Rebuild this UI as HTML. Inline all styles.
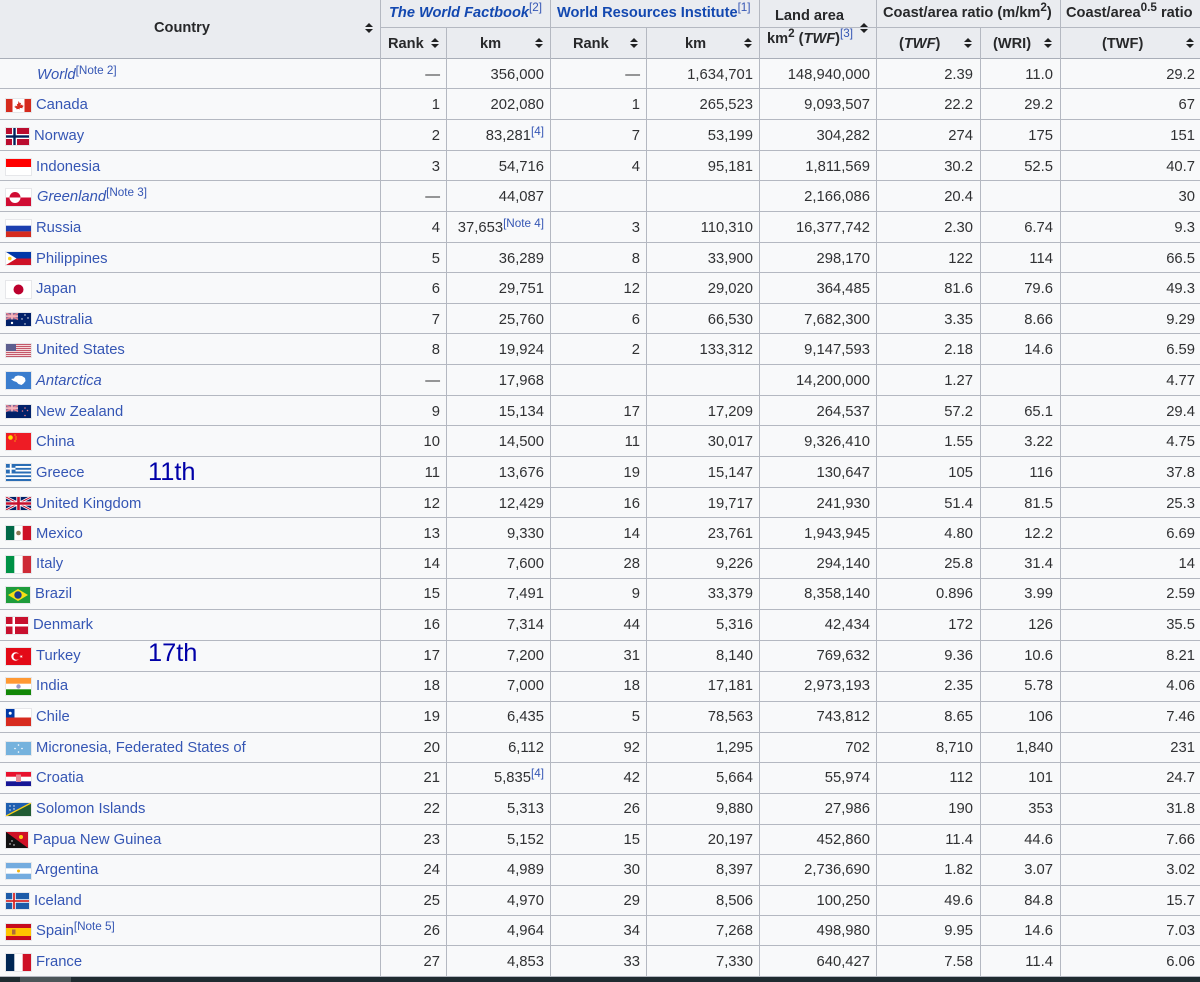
<!DOCTYPE html>
<html><head><meta charset="utf-8"><style>
html,body{margin:0;padding:0;background:#f8f9fa}
body{width:1200px;height:982px;position:relative;overflow:hidden;font-family:"Liberation Sans",Arial,sans-serif;font-size:14.8px;color:#303133;filter:blur(.3px)}
.r{position:absolute;left:0;width:1200px;height:31px;line-height:31px;border-top:1px solid #b4b8c1;white-space:nowrap;box-sizing:border-box}
.r a{position:absolute;left:36px;color:#3556b4;top:0}
.r span{position:absolute;top:0}
.u a,.u span{top:1px}
.r span:nth-of-type(1){right:760px}
.r span:nth-of-type(2){right:656px}
.r span:nth-of-type(3){right:560px}
.r span:nth-of-type(4){right:447px}
.r span:nth-of-type(5){right:330px}
.r span:nth-of-type(6){right:227px}
.r span:nth-of-type(7){right:147px}
.r span:nth-of-type(8){right:5px}
sup{font-size:11.7px;line-height:0;color:#3556b4;position:relative;top:1px;vertical-align:super}
.v{position:absolute;top:0;height:977px;width:1px;background:#b4b8c1;z-index:3}
.hd{position:absolute;left:0;top:0;width:1200px;height:59px;background:#eaecf0;border-bottom:1px solid #a9aeb8;box-sizing:border-box;z-index:1}
.h{position:absolute;font-weight:bold;font-size:14.6px;color:#27282a;white-space:nowrap;z-index:2;line-height:18px}
.h sup{font-weight:normal;font-size:11.7px;top:0}
.h a{color:#1348b0}
.s{position:absolute;width:8px;height:10px;z-index:2}
.s:before,.s:after{content:"";position:absolute;left:0;border-left:4px solid transparent;border-right:4px solid transparent}
.s:before{top:0;border-bottom:4.5px solid #202122}
.s:after{bottom:0;border-top:4.5px solid #202122}
svg{position:absolute;left:6px;z-index:2;outline:1px solid #e6e7ea}
.big{position:absolute;left:148px;font-size:25.4px;color:#0000a8;line-height:30px;z-index:2}
.ln{position:absolute;background:#b4b8c1;height:1px;z-index:2}
.bar{position:absolute;left:0;top:977px;width:1200px;height:5px;background:#1f2b30;z-index:5}
.th{position:absolute;left:20px;top:977px;width:51px;height:5px;background:#4c5659;z-index:6}
</style></head><body>
<div class="hd"></div>
<div class="ln" style="left:380px;top:27px;width:496px"></div>
<div class="ln" style="left:876px;top:27px;width:324px"></div>
<div class="h" style="left:154px;top:19px">Country</div>
<div class="h" style="left:389px;top:4px"><a><i>The World Factbook</i></a><sup>[2]</sup></div>
<div class="h" style="left:557px;top:4px"><a>World Resources Institute</a><sup>[1]</sup></div>
<div class="h" style="left:775px;top:7px">Land area</div>
<div class="h" style="left:767px;top:30px">km<sup style="color:#27282a;font-weight:bold">2</sup> (<i>TWF</i>)<sup>[3]</sup></div>
<div class="h" style="left:883px;top:4px">Coast/area ratio (m/km<sup style="color:#27282a;font-weight:bold">2</sup>)</div>
<div class="h" style="left:1066px;top:4px">Coast/area<sup style="color:#27282a;font-weight:bold">0.5</sup> ratio</div>
<div class="h" style="left:388px;top:35px">Rank</div>
<div class="h" style="left:480px;top:35px">km</div>
<div class="h" style="left:573px;top:35px">Rank</div>
<div class="h" style="left:685px;top:35px">km</div>
<div class="h" style="left:899px;top:35px">(<i>TWF</i>)</div>
<div class="h" style="left:993px;top:35px">(WRI)</div>
<div class="h" style="left:1102px;top:35px">(TWF)</div>
<b class="s" style="left:365px;top:23px"></b>
<b class="s" style="left:431px;top:38px"></b>
<b class="s" style="left:535px;top:38px"></b>
<b class="s" style="left:630px;top:38px"></b>
<b class="s" style="left:744px;top:38px"></b>
<b class="s" style="left:860px;top:23px"></b>
<b class="s" style="left:964px;top:38px"></b>
<b class="s" style="left:1044px;top:38px"></b>
<b class="s" style="left:1186px;top:38px"></b>

<div class="v" style="left:380px"></div><div class="v" style="left:446px;top:28px;height:949px"></div><div class="v" style="left:550px"></div><div class="v" style="left:646px;top:28px;height:949px"></div><div class="v" style="left:759px"></div><div class="v" style="left:876px"></div><div class="v" style="left:980px;top:28px;height:949px"></div><div class="v" style="left:1060px"></div>

<div class="r u" style="top:59px;border-top:0"><a style="left:37px"><i>World</i><sup>[Note 2]</sup></a><span>—</span><span>356,000</span><span>—</span><span>1,634,701</span><span>148,940,000</span><span>2.39</span><span>11.0</span><span>29.2</span></div>
<div class="r u" style="top:88px"><a>Canada</a><span>1</span><span>202,080</span><span>1</span><span>265,523</span><span>9,093,507</span><span>22.2</span><span>29.2</span><span>67</span></div>
<div class="r u" style="top:119px"><a style="left:34px">Norway</a><span>2</span><span>83,281<sup>[4]</sup></span><span>7</span><span>53,199</span><span>304,282</span><span>274</span><span>175</span><span>151</span></div>
<div class="r u" style="top:150px"><a>Indonesia</a><span>3</span><span>54,716</span><span>4</span><span>95,181</span><span>1,811,569</span><span>30.2</span><span>52.5</span><span>40.7</span></div>
<div class="r u" style="top:180px"><a style="left:37px"><i>Greenland</i><sup>[Note 3]</sup></a><span>—</span><span>44,087</span><span></span><span></span><span>2,166,086</span><span>20.4</span><span></span><span>30</span></div>
<div class="r u" style="top:211px"><a>Russia</a><span>4</span><span>37,653<sup>[Note 4]</sup></span><span>3</span><span>110,310</span><span>16,377,742</span><span>2.30</span><span>6.74</span><span>9.3</span></div>
<div class="r u" style="top:242px"><a>Philippines</a><span>5</span><span>36,289</span><span>8</span><span>33,900</span><span>298,170</span><span>122</span><span>114</span><span>66.5</span></div>
<div class="r u" style="top:272px"><a>Japan</a><span>6</span><span>29,751</span><span>12</span><span>29,020</span><span>364,485</span><span>81.6</span><span>79.6</span><span>49.3</span></div>
<div class="r u" style="top:303px"><a style="left:35px">Australia</a><span>7</span><span>25,760</span><span>6</span><span>66,530</span><span>7,682,300</span><span>3.35</span><span>8.66</span><span>9.29</span></div>
<div class="r u" style="top:333px"><a>United States</a><span>8</span><span>19,924</span><span>2</span><span>133,312</span><span>9,147,593</span><span>2.18</span><span>14.6</span><span>6.59</span></div>
<div class="r u" style="top:364px"><a><i>Antarctica</i></a><span>—</span><span>17,968</span><span></span><span></span><span>14,200,000</span><span>1.27</span><span></span><span>4.77</span></div>
<div class="r u" style="top:395px"><a>New Zealand</a><span>9</span><span>15,134</span><span>17</span><span>17,209</span><span>264,537</span><span>57.2</span><span>65.1</span><span>29.4</span></div>
<div class="r u" style="top:425px"><a>China</a><span>10</span><span>14,500</span><span>11</span><span>30,017</span><span>9,326,410</span><span>1.55</span><span>3.22</span><span>4.75</span></div>
<div class="r u" style="top:456px"><a>Greece</a><span>11</span><span>13,676</span><span>19</span><span>15,147</span><span>130,647</span><span>105</span><span>116</span><span>37.8</span></div>
<div class="r u" style="top:487px"><a>United Kingdom</a><span>12</span><span>12,429</span><span>16</span><span>19,717</span><span>241,930</span><span>51.4</span><span>81.5</span><span>25.3</span></div>
<div class="r u" style="top:517px"><a>Mexico</a><span>13</span><span>9,330</span><span>14</span><span>23,761</span><span>1,943,945</span><span>4.80</span><span>12.2</span><span>6.69</span></div>
<div class="r" style="top:548px"><a>Italy</a><span>14</span><span>7,600</span><span>28</span><span>9,226</span><span>294,140</span><span>25.8</span><span>31.4</span><span>14</span></div>
<div class="r" style="top:578px"><a style="left:35px">Brazil</a><span>15</span><span>7,491</span><span>9</span><span>33,379</span><span>8,358,140</span><span>0.896</span><span>3.99</span><span>2.59</span></div>
<div class="r" style="top:609px"><a style="left:33px">Denmark</a><span>16</span><span>7,314</span><span>44</span><span>5,316</span><span>42,434</span><span>172</span><span>126</span><span>35.5</span></div>
<div class="r" style="top:640px"><a>Turkey</a><span>17</span><span>7,200</span><span>31</span><span>8,140</span><span>769,632</span><span>9.36</span><span>10.6</span><span>8.21</span></div>
<div class="r" style="top:671px"><a style="top:-1px">India</a><span style="top:-1px">18</span><span style="top:-1px">7,000</span><span style="top:-1px">18</span><span style="top:-1px">17,181</span><span style="top:-1px">2,973,193</span><span style="top:-1px">2.35</span><span style="top:-1px">5.78</span><span style="top:-1px">4.06</span></div>
<div class="r" style="top:701px"><a>Chile</a><span>19</span><span>6,435</span><span>5</span><span>78,563</span><span>743,812</span><span>8.65</span><span>106</span><span>7.46</span></div>
<div class="r" style="top:732px"><a>Micronesia, Federated States of</a><span>20</span><span>6,112</span><span>92</span><span>1,295</span><span>702</span><span>8,710</span><span>1,840</span><span>231</span></div>
<div class="r" style="top:762px"><a>Croatia</a><span>21</span><span>5,835<sup>[4]</sup></span><span>42</span><span>5,664</span><span>55,974</span><span>112</span><span>101</span><span>24.7</span></div>
<div class="r" style="top:793px"><a>Solomon Islands</a><span>22</span><span>5,313</span><span>26</span><span>9,880</span><span>27,986</span><span>190</span><span>353</span><span>31.8</span></div>
<div class="r" style="top:824px"><a style="left:33px">Papua New Guinea</a><span>23</span><span>5,152</span><span>15</span><span>20,197</span><span>452,860</span><span>11.4</span><span>44.6</span><span>7.66</span></div>
<div class="r" style="top:854px"><a style="left:35px">Argentina</a><span>24</span><span>4,989</span><span>30</span><span>8,397</span><span>2,736,690</span><span>1.82</span><span>3.07</span><span>3.02</span></div>
<div class="r" style="top:885px"><a style="left:34px">Iceland</a><span>25</span><span>4,970</span><span>29</span><span>8,506</span><span>100,250</span><span>49.6</span><span>84.8</span><span>15.7</span></div>
<div class="r" style="top:915px"><a>Spain<sup>[Note 5]</sup></a><span>26</span><span>4,964</span><span>34</span><span>7,268</span><span>498,980</span><span>9.95</span><span>14.6</span><span>7.03</span></div>
<div class="r u" style="top:945px"><a>France</a><span>27</span><span>4,853</span><span>33</span><span>7,330</span><span>640,427</span><span>7.58</span><span>11.4</span><span>6.06</span></div>
<div class="ln" style="left:0;top:976px;width:1200px"></div>

<div class="big" style="top:457px">11th</div>
<div class="big" style="top:638px">17th</div>

<!-- Canada -->
<svg style="top:99px" width="25" height="13" viewBox="0 0 25 13"><rect width="25" height="13" fill="#fff"/><rect width="6.500" height="13" fill="#d52b1e"/><rect x="18.500" width="6.500" height="13" fill="#d52b1e"/><path d="M12.500 2l1.300 2.200 1.200-.4-.5 2.600 1.600-.9.4 1.100 1.300.2-1.400 1.600.3.9-3-.4v1.600h-.5V9.900l-3 .4.3-.9L8 7.800l1.300-.2.4-1.100 1.600.9-.5-2.600 1.200.4z" fill="#d52b1e"/></svg>
<!-- Norway -->
<svg style="top:128px" width="23" height="17" viewBox="0 0 23 17"><rect width="23" height="17" fill="#ba0c2f"/><rect x="6" width="5" height="17" fill="#fff"/><rect y="6" width="23" height="5" fill="#fff"/><rect x="7.300" width="2.400" height="17" fill="#00205b"/><rect y="7.300" width="23" height="2.400" fill="#00205b"/></svg>
<!-- Indonesia -->
<svg style="top:159px" width="25" height="16" viewBox="0 0 25 16"><rect width="25" height="16" fill="#fff"/><rect width="25" height="8" fill="#f00"/></svg>
<!-- Greenland -->
<svg style="top:189px" width="25" height="17" viewBox="0 0 25 17"><rect width="25" height="17" fill="#fff"/><rect y="8.500" width="25" height="8.500" fill="#d00c33"/><path d="M3.500 8.500a5.500 5.500 0 0 1 11 0z" fill="#d00c33"/><path d="M3.500 8.500a5.500 5.500 0 0 0 11 0z" fill="#fff"/></svg>
<!-- Russia -->
<svg style="top:220px" width="25" height="17" viewBox="0 0 25 17"><rect width="25" height="17" fill="#fff"/><rect y="5.700" width="25" height="5.700" fill="#1c3fb0"/><rect y="11.400" width="25" height="5.600" fill="#d52b1e"/></svg>
<!-- Philippines -->
<svg style="top:252px" width="25" height="13" viewBox="0 0 25 13"><rect width="25" height="6.500" fill="#0038a8"/><rect y="6.500" width="25" height="6.500" fill="#ce1126"/><path d="M0 0l10.500 6.500L0 13z" fill="#fff"/><circle cx="3.800" cy="6.500" r="1.800" fill="#fcd116"/></svg>
<!-- Japan -->
<svg style="top:281px" width="25" height="17" viewBox="0 0 25 17"><rect width="25" height="17" fill="#fff"/><circle cx="12.500" cy="8.500" r="5" fill="#bc002d"/></svg>
<!-- Australia -->
<svg style="top:313px" width="25" height="13" viewBox="0 0 25 13"><rect width="25" height="13" fill="#012169"/><rect width="12" height="6.500" fill="#7d6a9a"/><path d="M0 0l12 6.500M12 0L0 6.500" stroke="#e3808f" stroke-width="1.500"/><path d="M6 0v6.500M0 3.200h12" stroke="#f3b5bd" stroke-width="1.800"/><circle cx="6" cy="10" r="1.200" fill="#fff"/><circle cx="19" cy="2" r=".7" fill="#fff"/><circle cx="19" cy="11" r=".7" fill="#fff"/><circle cx="16" cy="6" r=".7" fill="#fff"/><circle cx="22" cy="5" r=".7" fill="#fff"/></svg>
<!-- US -->
<svg style="top:344px" width="25" height="13" viewBox="0 0 25 13"><rect width="25" height="13" fill="#f4d8da"/><path d="M0 .5h25M0 2.500h25M0 4.500h25M0 6.500h25M0 8.500h25M0 10.500h25M0 12.500h25" stroke="#c4586a" stroke-width="1"/><rect width="10" height="7" fill="#5d5f8f"/></svg>
<!-- Antarctica -->
<svg style="top:372px" width="25" height="17" viewBox="0 0 25 17"><rect width="25" height="17" fill="#3a7dce"/><path d="M5 7l3-.5 1-2 3-1 4 .5 3 2 .5 3-2 2.500-2 1.500-3-1-2-2-3-1z" fill="#fff"/></svg>
<!-- NZ -->
<svg style="top:405px" width="25" height="13" viewBox="0 0 25 13"><rect width="25" height="13" fill="#012169"/><rect width="12" height="6.500" fill="#7d6a9a"/><path d="M0 0l12 6.500M12 0L0 6.500" stroke="#e3808f" stroke-width="1.500"/><path d="M6 0v6.500M0 3.200h12" stroke="#f3b5bd" stroke-width="1.800"/><circle cx="19" cy="3" r=".8" fill="#e87a85"/><circle cx="19" cy="10.500" r=".8" fill="#e87a85"/><circle cx="16.500" cy="6" r=".8" fill="#e87a85"/><circle cx="21.500" cy="5.500" r=".8" fill="#e87a85"/></svg>
<!-- China -->
<svg style="top:433px" width="25" height="17" viewBox="0 0 25 17"><rect width="25" height="17" fill="#ee1c25"/><circle cx="4.500" cy="4.500" r="2.300" fill="#ffe000"/><circle cx="9" cy="2" r=".6" fill="#ffe000"/><circle cx="10" cy="4" r=".6" fill="#ffe000"/><circle cx="10" cy="6" r=".6" fill="#ffe000"/><circle cx="9" cy="8" r=".6" fill="#ffe000"/></svg>
<!-- Greece -->
<svg style="top:464px" width="25" height="17" viewBox="0 0 25 17"><rect width="25" height="17" fill="#fff"/><path d="M0 1h25M0 4.800h25M0 8.500h25M0 12.200h25M0 16h25" stroke="#2a6db5" stroke-width="1.900"/><rect width="9.500" height="9.400" fill="#2a6db5"/><path d="M4.700 0v9.400M0 4.700h9.500" stroke="#fff" stroke-width="1.800"/></svg>
<!-- UK -->
<svg style="top:497px" width="25" height="13" viewBox="0 0 25 13"><rect width="25" height="13" fill="#012169"/><path d="M0 0l25 13M25 0L0 13" stroke="#fff" stroke-width="2.600"/><path d="M0 0l25 13M25 0L0 13" stroke="#c8102e" stroke-width="1"/><path d="M12.500 0v13M0 6.500h25" stroke="#fff" stroke-width="4.300"/><path d="M12.500 0v13M0 6.500h25" stroke="#c8102e" stroke-width="2.600"/></svg>
<!-- Mexico -->
<svg style="top:526px" width="25" height="14" viewBox="0 0 25 14"><rect width="25" height="14" fill="#fff"/><rect width="8.300" height="14" fill="#006847"/><rect x="16.700" width="8.300" height="14" fill="#ce1126"/><circle cx="12.500" cy="7" r="2.300" fill="#8c7a56"/></svg>
<!-- Italy -->
<svg style="top:556px" width="25" height="17" viewBox="0 0 25 17"><rect width="25" height="17" fill="#fff"/><rect width="8.300" height="17" fill="#009246"/><rect x="16.700" width="8.300" height="17" fill="#ce2b37"/></svg>
<!-- Brazil -->
<svg style="top:587px" width="24" height="16" viewBox="0 0 24 16"><rect width="24" height="16" fill="#1e9c3b"/><path d="M12 2l10 6-10 6L2 8z" fill="#f6e015"/><circle cx="12" cy="8" r="3.700" fill="#1c3a8c"/></svg>
<!-- Denmark -->
<svg style="top:617px" width="22" height="17" viewBox="0 0 22 17"><rect width="22" height="17" fill="#c8102e"/><rect x="6.500" width="2.500" height="17" fill="#fff"/><rect y="7" width="22" height="2.500" fill="#fff"/></svg>
<!-- Turkey -->
<svg style="top:648px" width="25" height="17" viewBox="0 0 25 17"><rect width="25" height="17" fill="#e30a17"/><circle cx="9.500" cy="8.500" r="4.200" fill="#fff"/><circle cx="10.700" cy="8.500" r="3.300" fill="#e30a17"/><path d="M13.500 8.500l3.200-1-2 2.700V6.800l2 2.700z" fill="#fff"/></svg>
<!-- India -->
<svg style="top:678px" width="25" height="17" viewBox="0 0 25 17"><rect width="25" height="17" fill="#fff"/><rect width="25" height="5.700" fill="#f93"/><rect y="11.300" width="25" height="5.700" fill="#138808"/><circle cx="12.500" cy="8.500" r="2.200" fill="#9a9ac8"/></svg>
<!-- Chile -->
<svg style="top:709px" width="25" height="17" viewBox="0 0 25 17"><rect width="25" height="17" fill="#fff"/><rect y="8.500" width="25" height="8.500" fill="#d72b1f"/><rect width="8.500" height="8.500" fill="#0039a6"/><circle cx="4.200" cy="4.200" r="1.500" fill="#fff"/></svg>
<!-- Micronesia -->
<svg style="top:742px" width="25" height="13" viewBox="0 0 25 13"><rect width="25" height="13" fill="#75b2dd"/><circle cx="12.500" cy="3" r=".8" fill="#fff"/><circle cx="12.500" cy="10" r=".8" fill="#fff"/><circle cx="9" cy="6.500" r=".8" fill="#fff"/><circle cx="16" cy="6.500" r=".8" fill="#fff"/></svg>
<!-- Croatia -->
<svg style="top:772px" width="25" height="14" viewBox="0 0 25 14"><rect width="25" height="14" fill="#fff"/><rect width="25" height="4.700" fill="#e8112d"/><rect y="9.300" width="25" height="4.700" fill="#171796"/><rect x="10" y="2.500" width="5" height="7.500" fill="#e58a94"/></svg>
<!-- Solomon -->
<svg style="top:803px" width="25" height="13" viewBox="0 0 25 13"><rect width="25" height="13" fill="#215b33"/><path d="M0 0h25L0 13z" fill="#1f5fb0"/><path d="M0 13L25 0" stroke="#fcd116" stroke-width="1.300"/><circle cx="4" cy="3" r=".7" fill="#fff"/><circle cx="8" cy="3" r=".7" fill="#fff"/><circle cx="4" cy="7" r=".7" fill="#fff"/><circle cx="8" cy="6" r=".7" fill="#fff"/></svg>
<!-- PNG -->
<svg style="top:832px" width="22" height="16" viewBox="0 0 22 16"><rect width="22" height="16" fill="#ce1126"/><path d="M0 0v16h22z" fill="#111"/><circle cx="15" cy="5" r="2" fill="#fcd116"/><circle cx="6" cy="9" r=".7" fill="#fff"/><circle cx="4" cy="12" r=".7" fill="#fff"/><circle cx="8" cy="13" r=".7" fill="#fff"/></svg>
<!-- Argentina -->
<svg style="top:863px" width="25" height="16" viewBox="0 0 25 16"><rect width="25" height="16" fill="#fff"/><rect width="25" height="5.300" fill="#74acdf"/><rect y="10.700" width="25" height="5.300" fill="#74acdf"/><circle cx="12.500" cy="8" r="1.500" fill="#f6b40e"/></svg>
<!-- Iceland -->
<svg style="top:893px" width="23" height="16" viewBox="0 0 23 16"><rect width="23" height="16" fill="#1d5ba8"/><path d="M8 0v16M0 8h23" stroke="#fff" stroke-width="3.500"/><path d="M8 0v16M0 8h23" stroke="#d72828" stroke-width="1.800"/></svg>
<!-- Spain -->
<svg style="top:924px" width="25" height="16" viewBox="0 0 25 16"><rect width="25" height="16" fill="#c60b1e"/><rect y="4" width="25" height="8" fill="#ffc400"/><rect x="6" y="5.500" width="3.500" height="5" fill="#ad6a3a"/></svg>
<!-- France -->
<svg style="top:954px" width="25" height="17" viewBox="0 0 25 17"><rect width="25" height="17" fill="#fff"/><rect width="8.300" height="17" fill="#002654"/><rect x="16.700" width="8.300" height="17" fill="#ce1126"/></svg>

<div class="bar"></div><div class="th"></div>
</body></html>
